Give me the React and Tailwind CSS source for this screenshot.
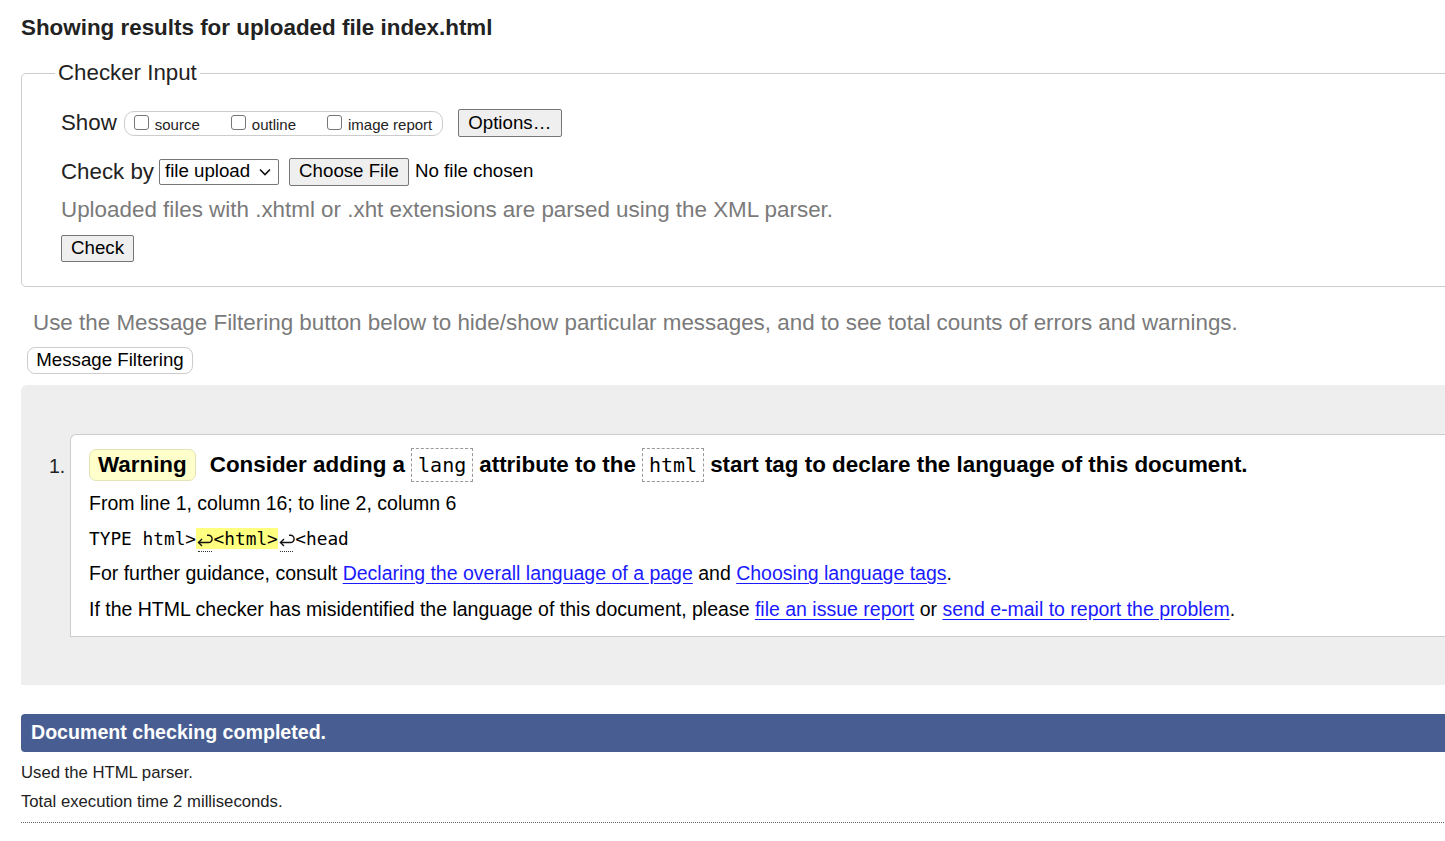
import React from 'react';

const sans = { fontFamily: '"Liberation Sans", Arial, sans-serif' };
const mono = { fontFamily: '"DejaVu Sans Mono", "Liberation Mono", monospace' };

const Checkbox = ({ label }) => (
  <span className="flex items-end">
    <span className="mb-[3px] h-[15px] w-[15px] rounded-[3px] border border-[#767676] bg-white"></span>
    <span className="ml-[6px] text-[15px] leading-[17px] text-[#222]">{label}</span>
  </span>
);

const Button = ({ children, className = '' }) => (
  <span
    className={`flex items-center justify-center rounded-[2px] border border-[#767676] bg-[#efefef] text-[18.7px] text-black ${className}`}
  >
    {children}
  </span>
);

const Code = ({ children }) => (
  <span
    className="mx-[6px] inline-flex h-[34px] items-center border border-dashed border-[#999] px-[6px] text-[20px] font-normal"
    style={mono}
  >
    {children}
  </span>
);

const Link = ({ children }) => (
  <a href="#" className="text-[#1a1aff] underline underline-offset-[3px]">
    {children}
  </a>
);

// line-break marker, drawn as a hooked left arrow
const BreakMark = () => (
  <span className="relative inline-block h-[20px] w-[17.5px] align-[-4px]">
    <svg width="17" height="20" viewBox="0 0 17 20" fill="none" className="block">
      <path d="M2.5 13.5H12.5A3.6 3.6 0 0 0 12.5 6.3H11" stroke="#111" strokeWidth="1.4" />
      <path d="M6 10 2.5 13.5 6 17" stroke="#111" strokeWidth="1.4" />
    </svg>
    <span className="absolute bottom-[-3px] left-[2px] right-[2px] border-b border-dotted border-[#333]"></span>
  </span>
);

export default function App() {
  return (
    <div className="h-[841px] w-[1445px] overflow-hidden bg-white text-[#222]" style={sans}>
      <div className="w-[1480px] pl-[21px]">
        {/* Title */}
        <h1 className="pt-[15px] text-[22.4px] font-bold leading-[26px] text-[#222]">
          Showing results for uploaded file index.html
        </h1>

        {/* Checker input */}
        <fieldset className="mt-[19px] rounded-[5px] border border-[#ccc] pb-[24px]">
          <legend className="ml-[33px] px-[3px] text-[22.3px] leading-[26px] text-[#222]">Checker Input</legend>

          <div className="pl-[39px]">
            <div className="mt-[23px] flex h-[28px] items-center">
              <span className="text-[22.3px]">Show</span>
              <span className="ml-[7px] flex h-[25px] w-[319px] items-end gap-[31px] rounded-[10px] border border-[#ccc] pb-[2px] pl-[9px]">
                <Checkbox label="source" />
                <Checkbox label="outline" />
                <Checkbox label="image report" />
              </span>
              <Button className="ml-[15px] h-[28px] w-[104px]">Options…</Button>
            </div>

            <div className="mt-[20px] flex h-[29px] items-center">
              <span className="text-[22.3px]">Check by</span>
              <span className="ml-[5px] flex h-[26px] w-[120px] items-center justify-between rounded-[2px] border border-[#767676] bg-white pl-[5px] pr-[7px] text-[18.7px] text-black">
                file upload
                <svg width="12" height="8" viewBox="0 0 12 8" fill="none">
                  <path d="M1 1.5 6 6.5 11 1.5" stroke="#111" strokeWidth="1.6" />
                </svg>
              </span>
              <Button className="ml-[10px] h-[28px] w-[120px]">Choose File</Button>
              <span className="ml-[6px] text-[18.7px] text-black">No file chosen</span>
            </div>

            <p className="mt-[11px] text-[22.4px] leading-[26px] text-[#7a7a7a]">
              Uploaded files with .xhtml or .xht extensions are parsed using the XML parser.
            </p>

            <Button className="mt-[12px] h-[27px] w-[73px]">Check</Button>
          </div>
        </fieldset>

        {/* Filtering */}
        <p className="mt-[23px] pl-[12px] text-[22.4px] leading-[26px] text-[#7a7a7a]">
          Use the Message Filtering button below to hide/show particular messages, and to see total counts of errors and warnings.
        </p>
        <span className="ml-[6px] mt-[11px] flex h-[27px] w-[166px] items-center justify-center rounded-[8px] border border-[#ccc] bg-white text-[18.7px] text-black">
          Message Filtering
        </span>

        {/* Results */}
        <div className="mt-[11px] rounded-tl-[6px] bg-[#eeeeee] pb-[48px] pl-[28px] pt-[49px]">
          <div className="flex">
            <span className="mt-[21px] w-[21px] text-[19.5px] leading-[22px] text-[#222]">1.</span>
            <div className="flex-1 rounded-tl-[6px] border-b border-l border-t border-[#ccc] bg-white pb-[7px] pl-[18px] pt-[12px] text-[19.5px] text-black">
              <div className="flex h-[36px] items-center text-[22.4px] font-bold">
                <span className="flex h-[32px] items-center rounded-[7px] border border-[#e3e3b5] bg-[#ffffcc] px-[8px]">Warning</span>
                <span className="ml-[14px]">Consider adding a</span>
                <Code>lang</Code>
                <span>attribute to the</span>
                <Code>html</Code>
                <span>start tag to declare the language of this document.</span>
              </div>
              <p className="mt-[2px] leading-[36px]">From line 1, column 16; to line 2, column 6</p>
              <p className="text-[17.8px] leading-[36px]" style={mono}>
                TYPE html&gt;
                <span className="bg-[#ffff80]">
                  <BreakMark />&lt;html&gt;
                </span>
                <BreakMark />&lt;head
              </p>
              <p className="leading-[32px]">
                For further guidance, consult <Link>Declaring the overall language of a page</Link> and{' '}
                <Link>Choosing language tags</Link>.
              </p>
              <p className="leading-[40px]">
                If the HTML checker has misidentified the language of this document, please{' '}
                <Link>file an issue report</Link> or <Link>send e-mail to report the problem</Link>.
              </p>
            </div>
          </div>
        </div>

        {/* Summary */}
        <div className="mt-[29px] flex h-[38px] items-center rounded-l-[4px] bg-[#485e92] pl-[10px] text-[19.6px] font-bold text-white">
          Document checking completed.
        </div>
        <p className="mt-[11px] text-[16.7px] leading-[20px] text-[#222]">Used the HTML parser.</p>
        <p className="mt-[9px] text-[16.7px] leading-[20px] text-[#222]">Total execution time 2 milliseconds.</p>
        <div className="mt-[10px] border-t border-dotted border-[#666]"></div>
      </div>
    </div>
  );
}
